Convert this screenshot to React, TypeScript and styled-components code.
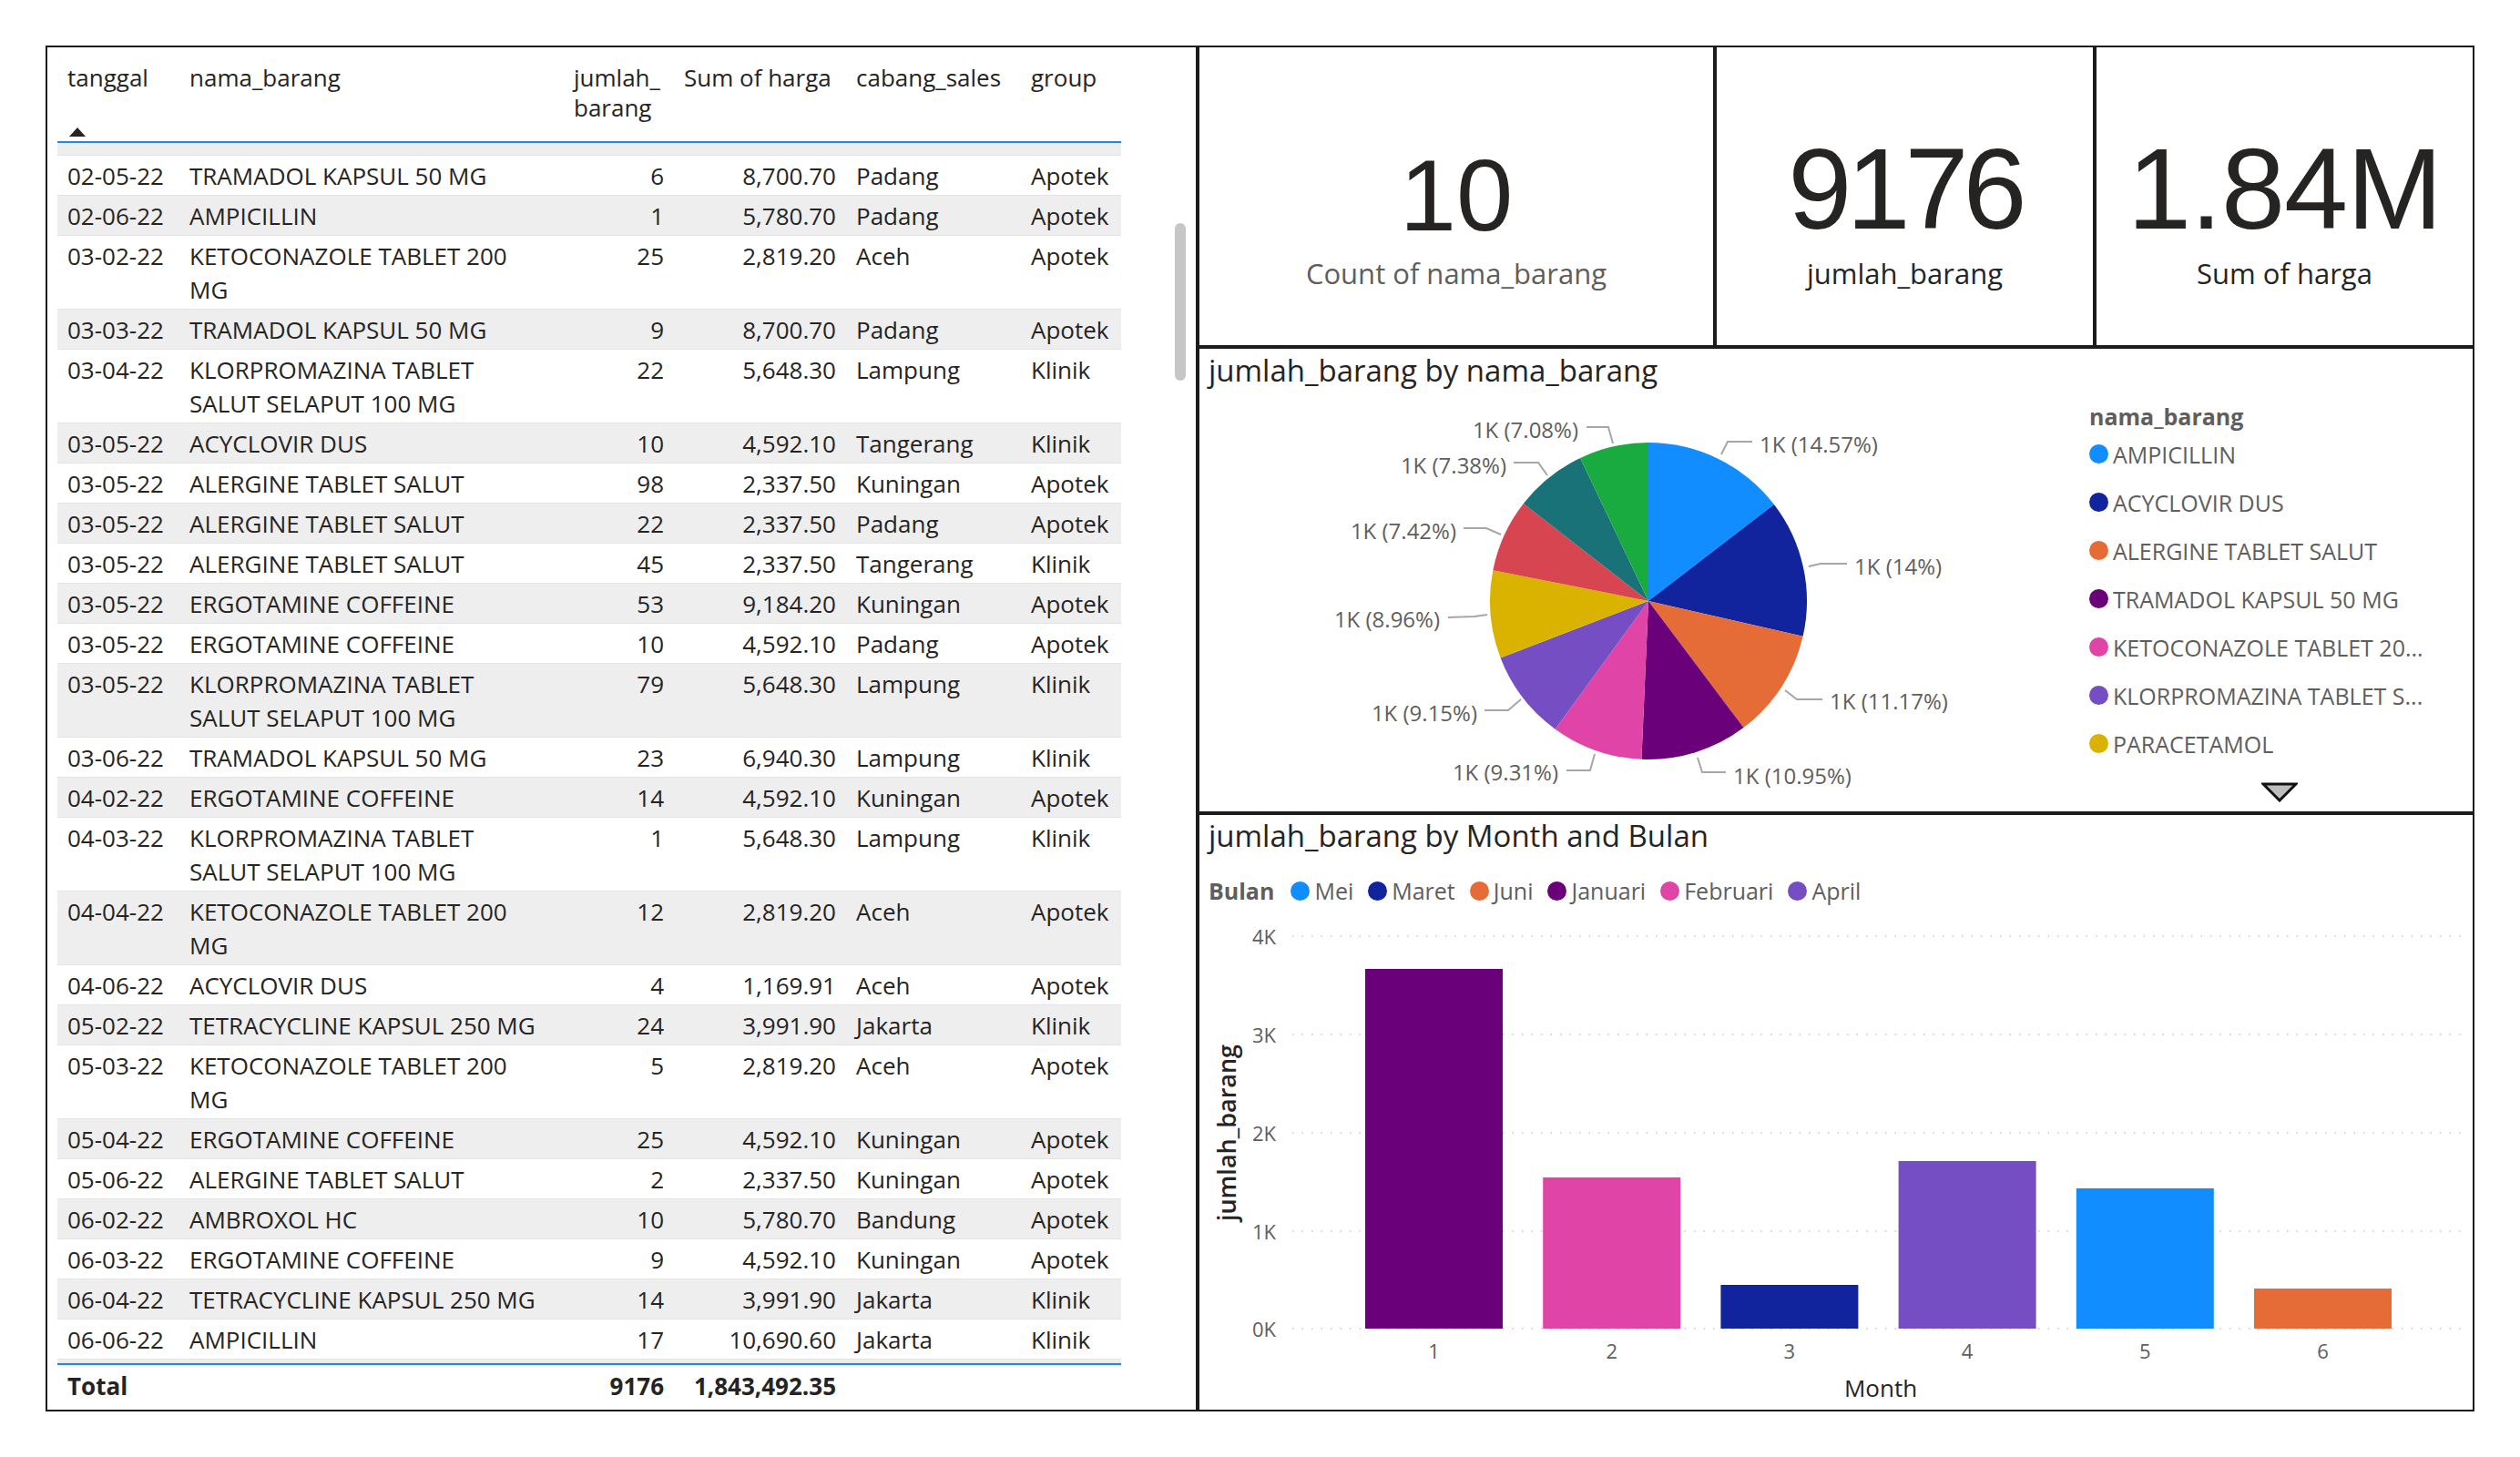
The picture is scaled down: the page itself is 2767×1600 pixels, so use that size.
import React from "react";
import styled, { createGlobalStyle } from "styled-components";

const UI_FONT = `"Open Sans", "Noto Sans", sans-serif`;
const NUM_FONT = `"Liberation Sans", Arial, sans-serif`;
const INK = "#252423";
const SOFT = "#605E5C";
const FRAME = "#1c1c1c";
const ACCENT = "#1E8AE6";
const COLS = "134px 422px 121px 189px 192px 110px";

const GlobalStyle = createGlobalStyle`
  html, body { margin: 0; padding: 0; background: #ffffff; }
  body { font-family: ${UI_FONT}; color: ${INK}; }
  *, *::before, *::after { box-sizing: border-box; }
`;

const Page = styled.div`
  width: 2767px;
  height: 1600px;
  padding: 50px 0 0 50px;
  display: grid;
  grid-template-columns: 1265px 1402px;
  grid-template-rows: 1500px;
  background: #ffffff;
`;

/* ---------------- Table ---------------- */

const TablePanel = styled.section`
  position: relative;
  border: 2px solid ${FRAME};
  padding: 0 0 0 11px;
  overflow: hidden;
`;

const TableBox = styled.div`
  width: 1168px;
  font-size: 26px;
  color: ${INK};
`;

const HeaderRow = styled.div`
  display: grid;
  grid-template-columns: ${COLS};
  height: 105px;
  border-bottom: 2px solid ${ACCENT};
  line-height: 33px;
`;

const HeaderCell = styled.div`
  padding: 17px 6px 0 11px;
  display: flex;
  flex-direction: column;
  align-items: flex-start;
  white-space: pre-line;
`;

const SortArrow = styled.span`
  width: 0;
  height: 0;
  margin: 38px 0 0 2px;
  border-left: 9px solid transparent;
  border-right: 9px solid transparent;
  border-bottom: 10px solid ${INK};
`;

const Stub = styled.div<{ $h: number }>`
  height: ${(p) => p.$h}px;
  background: #eeeeee;
  border-bottom: 1px solid #e3e3e3;
`;

const DataRow = styled.div<{ $alt: boolean }>`
  display: grid;
  grid-template-columns: ${COLS};
  padding: 4px 0 2px;
  line-height: 37px;
  background: ${(p) => (p.$alt ? "#eeeeee" : "#ffffff")};
  border-bottom: 1px solid #e3e3e3;
`;

const Cell = styled.div<{ $num?: boolean }>`
  padding: 0 11px 0 11px;
  white-space: pre-line;
  text-align: ${(p) => (p.$num ? "right" : "left")};
`;

const TotalRow = styled.div`
  display: grid;
  grid-template-columns: ${COLS};
  align-items: center;
  height: 48px;
  border-top: 2px solid ${ACCENT};
  font-weight: 700;
  line-height: 36px;
`;

const ScrollThumb = styled.div`
  position: absolute;
  left: 1238px;
  top: 193px;
  width: 12px;
  height: 173px;
  border-radius: 6px;
  background: #c6c6c6;
`;

/* ---------------- Right side ---------------- */

const RightColumn = styled.div`
  display: grid;
  grid-template-rows: 331px 512px 657px;
`;

const CardsRow = styled.div`
  display: grid;
  grid-template-columns: 568px 417px 417px;
`;

const Card = styled.div`
  border: 2px solid ${FRAME};
  display: flex;
  flex-direction: column;
  align-items: center;
`;

const ValueBox = styled.div`
  height: 219px;
  display: flex;
  align-items: flex-end;
  justify-content: center;
`;

const Value = styled.div<{ $size: number; $spacing: number }>`
  font-family: ${NUM_FONT};
  font-size: ${(p) => p.$size}px;
  letter-spacing: ${(p) => p.$spacing}px;
  line-height: 1;
  color: ${INK};
`;

const CardLabel = styled.div<{ $muted?: boolean }>`
  margin-top: 9px;
  font-size: 31px;
  line-height: 40px;
  color: ${(p) => (p.$muted ? SOFT : INK)};
`;

const ChartPanel = styled.section`
  border: 2px solid ${FRAME};
  padding: 5px 0 0 10px;
  display: flex;
  flex-direction: column;
`;

const ChartTitle = styled.h2<{ $top: number }>`
  margin: ${(p) => p.$top}px 0 0;
  font-size: 33px;
  font-weight: 400;
  line-height: 36px;
  color: ${INK};
`;

const PieBody = styled.div`
  display: flex;
  align-items: flex-start;
`;

const PieLegend = styled.div`
  margin-left: 14px;
  padding-top: 17px;
  display: flex;
  flex-direction: column;
`;

const LegendTitle = styled.div`
  font-size: 25px;
  font-weight: 700;
  line-height: 30px;
  color: ${SOFT};
`;

const LegendItem = styled.div<{ $h?: number }>`
  display: flex;
  align-items: center;
  gap: 5px;
  height: ${(p) => (p.$h ? `${p.$h}px` : "auto")};
  font-size: 25px;
  color: ${SOFT};
  white-space: nowrap;
`;

const Dot = styled.span<{ $color: string }>`
  width: 21px;
  height: 21px;
  border-radius: 50%;
  background: ${(p) => p.$color};
  flex: none;
`;

const MoreArrow = styled.svg`
  margin: 16px 0 0 189px;
  display: block;
`;

const BarLegend = styled.div`
  margin-top: 25px;
  height: 34px;
  display: flex;
  align-items: center;
  gap: 16px;
`;

const BarLegendTitle = styled.span`
  font-size: 25px;
  font-weight: 700;
  color: ${SOFT};
  margin-right: 2px;
`;

const ChartSvg = styled.svg`
  display: block;
  font-family: ${UI_FONT};
`;

/* ---------------- Data ---------------- */

type RowData = [string, string, number, string, string, string];

const rows: RowData[] = [
  ["02-05-22", "TRAMADOL KAPSUL 50 MG", 6, "8,700.70", "Padang", "Apotek"],
  ["02-06-22", "AMPICILLIN", 1, "5,780.70", "Padang", "Apotek"],
  ["03-02-22", "KETOCONAZOLE TABLET 200\nMG", 25, "2,819.20", "Aceh", "Apotek"],
  ["03-03-22", "TRAMADOL KAPSUL 50 MG", 9, "8,700.70", "Padang", "Apotek"],
  ["03-04-22", "KLORPROMAZINA TABLET\nSALUT SELAPUT 100 MG", 22, "5,648.30", "Lampung", "Klinik"],
  ["03-05-22", "ACYCLOVIR DUS", 10, "4,592.10", "Tangerang", "Klinik"],
  ["03-05-22", "ALERGINE TABLET SALUT", 98, "2,337.50", "Kuningan", "Apotek"],
  ["03-05-22", "ALERGINE TABLET SALUT", 22, "2,337.50", "Padang", "Apotek"],
  ["03-05-22", "ALERGINE TABLET SALUT", 45, "2,337.50", "Tangerang", "Klinik"],
  ["03-05-22", "ERGOTAMINE COFFEINE", 53, "9,184.20", "Kuningan", "Apotek"],
  ["03-05-22", "ERGOTAMINE COFFEINE", 10, "4,592.10", "Padang", "Apotek"],
  ["03-05-22", "KLORPROMAZINA TABLET\nSALUT SELAPUT 100 MG", 79, "5,648.30", "Lampung", "Klinik"],
  ["03-06-22", "TRAMADOL KAPSUL 50 MG", 23, "6,940.30", "Lampung", "Klinik"],
  ["04-02-22", "ERGOTAMINE COFFEINE", 14, "4,592.10", "Kuningan", "Apotek"],
  ["04-03-22", "KLORPROMAZINA TABLET\nSALUT SELAPUT 100 MG", 1, "5,648.30", "Lampung", "Klinik"],
  ["04-04-22", "KETOCONAZOLE TABLET 200\nMG", 12, "2,819.20", "Aceh", "Apotek"],
  ["04-06-22", "ACYCLOVIR DUS", 4, "1,169.91", "Aceh", "Apotek"],
  ["05-02-22", "TETRACYCLINE KAPSUL 250 MG", 24, "3,991.90", "Jakarta", "Klinik"],
  ["05-03-22", "KETOCONAZOLE TABLET 200\nMG", 5, "2,819.20", "Aceh", "Apotek"],
  ["05-04-22", "ERGOTAMINE COFFEINE", 25, "4,592.10", "Kuningan", "Apotek"],
  ["05-06-22", "ALERGINE TABLET SALUT", 2, "2,337.50", "Kuningan", "Apotek"],
  ["06-02-22", "AMBROXOL HC", 10, "5,780.70", "Bandung", "Apotek"],
  ["06-03-22", "ERGOTAMINE COFFEINE", 9, "4,592.10", "Kuningan", "Apotek"],
  ["06-04-22", "TETRACYCLINE KAPSUL 250 MG", 14, "3,991.90", "Jakarta", "Klinik"],
  ["06-06-22", "AMPICILLIN", 17, "10,690.60", "Jakarta", "Klinik"],
];

const slices = [
  { pct: 14.57, color: "#118DFF" },
  { pct: 14.0, color: "#12239E" },
  { pct: 11.17, color: "#E66C37" },
  { pct: 10.95, color: "#6B007B" },
  { pct: 9.31, color: "#E044A7" },
  { pct: 9.15, color: "#744EC2" },
  { pct: 8.96, color: "#D9B300" },
  { pct: 7.42, color: "#D64550" },
  { pct: 7.38, color: "#197278" },
  { pct: 7.08, color: "#1AAB40" },
];

type PieLabel = { text: string; x: number; y: number; anchor: "start" | "end"; line: string };

const pieLabels: PieLabel[] = [
  { text: "1K (14.57%)", x: 1932, y: 487, anchor: "start", line: "1890,499 1897,485 1924,485" },
  { text: "1K (14%)", x: 2036, y: 621, anchor: "start", line: "1986,622 1999,619 2028,619" },
  { text: "1K (11.17%)", x: 2009, y: 769, anchor: "start", line: "1960,758 1973,768 2001,768" },
  { text: "1K (10.95%)", x: 1903, y: 851, anchor: "start", line: "1864,832 1869,848 1895,848" },
  { text: "1K (9.31%)", x: 1711, y: 847, anchor: "end", line: "1720,846 1746,846 1751,828" },
  { text: "1K (9.15%)", x: 1622, y: 782, anchor: "end", line: "1630,780 1656,780 1670,768" },
  { text: "1K (8.96%)", x: 1581, y: 679, anchor: "end", line: "1590,678 1619,677 1633,675" },
  { text: "1K (7.42%)", x: 1599, y: 582, anchor: "end", line: "1607,580 1632,580 1648,587" },
  { text: "1K (7.38%)", x: 1654, y: 510, anchor: "end", line: "1662,508 1689,508 1699,522" },
  { text: "1K (7.08%)", x: 1733, y: 471, anchor: "end", line: "1742,469 1766,469 1771,487" },
];

const pieLegend = [
  { label: "AMPICILLIN", color: "#118DFF" },
  { label: "ACYCLOVIR DUS", color: "#12239E" },
  { label: "ALERGINE TABLET SALUT", color: "#E66C37" },
  { label: "TRAMADOL KAPSUL 50 MG", color: "#6B007B" },
  { label: "KETOCONAZOLE TABLET 20...", color: "#E044A7" },
  { label: "KLORPROMAZINA TABLET S...", color: "#744EC2" },
  { label: "PARACETAMOL", color: "#D9B300" },
];

const barLegend = [
  { label: "Mei", color: "#118DFF" },
  { label: "Maret", color: "#12239E" },
  { label: "Juni", color: "#E66C37" },
  { label: "Januari", color: "#6B007B" },
  { label: "Februari", color: "#E044A7" },
  { label: "April", color: "#744EC2" },
];

const bars = [
  { month: "1", top: 1064, color: "#6B007B" },
  { month: "2", top: 1293, color: "#E044A7" },
  { month: "3", top: 1411, color: "#12239E" },
  { month: "4", top: 1275, color: "#744EC2" },
  { month: "5", top: 1305, color: "#118DFF" },
  { month: "6", top: 1415, color: "#E66C37" },
];

const gridLines = [
  { label: "4K", y: 1028 },
  { label: "3K", y: 1136 },
  { label: "2K", y: 1244 },
  { label: "1K", y: 1352 },
  { label: "0K", y: 1459 },
];

/* ---------------- Charts ---------------- */

function slicePath(cx: number, cy: number, r: number, a0: number, a1: number) {
  const x0 = cx + r * Math.cos(a0);
  const y0 = cy + r * Math.sin(a0);
  const x1 = cx + r * Math.cos(a1);
  const y1 = cy + r * Math.sin(a1);
  const large = a1 - a0 > Math.PI ? 1 : 0;
  return `M${cx} ${cy} L${x0.toFixed(2)} ${y0.toFixed(2)} A${r} ${r} 0 ${large} 1 ${x1.toFixed(2)} ${y1.toFixed(2)} Z`;
}

function PieChart() {
  const total = slices.reduce((s, x) => s + x.pct, 0);
  let angle = -Math.PI / 2;
  const cx = 1810;
  const cy = 660;
  const r = 174;
  return (
    <ChartSvg width={953} height={463} viewBox="1327 425 953 463">
      {slices.map((s, i) => {
        const a0 = angle;
        const a1 = angle + (s.pct / total) * Math.PI * 2;
        angle = a1;
        return <path key={i} d={slicePath(cx, cy, r, a0, a1)} fill={s.color} />;
      })}
      {pieLabels.map((l, i) => (
        <g key={i}>
          <polyline points={l.line} fill="none" stroke="#a6a6a6" strokeWidth={2} />
          <text x={l.x} y={l.y} textAnchor={l.anchor} dominantBaseline="central" fontSize={24} fill={SOFT}>
            {l.text}
          </text>
        </g>
      ))}
    </ChartSvg>
  );
}

function BarChart() {
  const left = 1419;
  const right = 2705;
  const base = 1459;
  return (
    <ChartSvg width={1388} height={553} viewBox="1327 995 1388 553">
      {gridLines.map((g) => (
        <g key={g.label}>
          <line x1={left} x2={right} y1={g.y} y2={g.y} stroke="#c8c6c4" strokeWidth={1.5} strokeDasharray="1.5 9" />
          <text x={1401} y={g.y} textAnchor="end" dominantBaseline="central" fontSize={22} fill={SOFT}>
            {g.label}
          </text>
        </g>
      ))}
      {bars.map((b, i) => {
        const x = 1499 + i * 195.2;
        return (
          <g key={b.month}>
            <rect x={x} y={b.top} width={151} height={base - b.top} fill={b.color} />
            <text x={x + 75.5} y={1483} textAnchor="middle" dominantBaseline="central" fontSize={22} fill={SOFT}>
              {b.month}
            </text>
          </g>
        );
      })}
      <text x={2065} y={1524} textAnchor="middle" dominantBaseline="central" fontSize={26} fill={INK}>
        Month
      </text>
      <text
        x={1346}
        y={1244}
        textAnchor="middle"
        dominantBaseline="central"
        fontSize={27}
        fontWeight={600}
        fill={INK}
        transform="rotate(-90 1346 1244)"
      >
        jumlah_barang
      </text>
    </ChartSvg>
  );
}

/* ---------------- App ---------------- */

export default function App() {
  return (
    <>
      <GlobalStyle />
      <Page>
        <TablePanel>
          <TableBox>
            <HeaderRow>
              <HeaderCell>
                tanggal
                <SortArrow />
              </HeaderCell>
              <HeaderCell>nama_barang</HeaderCell>
              <HeaderCell>{"jumlah_\nbarang"}</HeaderCell>
              <HeaderCell>Sum of harga</HeaderCell>
              <HeaderCell>cabang_sales</HeaderCell>
              <HeaderCell>group</HeaderCell>
            </HeaderRow>
            <Stub $h={14} />
            {rows.map((r, i) => (
              <DataRow key={i} $alt={i % 2 === 1}>
                <Cell>{r[0]}</Cell>
                <Cell>{r[1]}</Cell>
                <Cell $num>{r[2]}</Cell>
                <Cell $num>{r[3]}</Cell>
                <Cell>{r[4]}</Cell>
                <Cell>{r[5]}</Cell>
              </DataRow>
            ))}
            <Stub $h={4} />
            <TotalRow>
              <Cell>Total</Cell>
              <Cell />
              <Cell $num>9176</Cell>
              <Cell $num>1,843,492.35</Cell>
              <Cell />
              <Cell />
            </TotalRow>
          </TableBox>
          <ScrollThumb />
        </TablePanel>

        <RightColumn>
          <CardsRow>
            <Card>
              <ValueBox>
                <Value $size={112} $spacing={0}>10</Value>
              </ValueBox>
              <CardLabel $muted>Count of nama_barang</CardLabel>
            </Card>
            <Card>
              <ValueBox>
                <Value $size={126} $spacing={-6}>9176</Value>
              </ValueBox>
              <CardLabel>jumlah_barang</CardLabel>
            </Card>
            <Card>
              <ValueBox>
                <Value $size={126} $spacing={-1}>1.84M</Value>
              </ValueBox>
              <CardLabel>Sum of harga</CardLabel>
            </Card>
          </CardsRow>

          <ChartPanel>
            <ChartTitle $top={1}>jumlah_barang by nama_barang</ChartTitle>
            <PieBody>
              <PieChart />
              <PieLegend>
                <LegendTitle>nama_barang</LegendTitle>
                {pieLegend.map((l) => (
                  <LegendItem key={l.label} $h={53}>
                    <Dot $color={l.color} />
                    {l.label}
                  </LegendItem>
                ))}
                <MoreArrow width={40} height={22} viewBox="0 0 40 22">
                  <polygon points="2,2 38,2 20,20" fill="#bdbdbd" stroke="#111" strokeWidth={3} strokeLinejoin="miter" />
                </MoreArrow>
              </PieLegend>
            </PieBody>
          </ChartPanel>

          <ChartPanel>
            <ChartTitle $top={0}>jumlah_barang by Month and Bulan</ChartTitle>
            <BarLegend>
              <BarLegendTitle>Bulan</BarLegendTitle>
              {barLegend.map((l) => (
                <LegendItem key={l.label}>
                  <Dot $color={l.color} />
                  {l.label}
                </LegendItem>
              ))}
            </BarLegend>
            <BarChart />
          </ChartPanel>
        </RightColumn>
      </Page>
    </>
  );
}
